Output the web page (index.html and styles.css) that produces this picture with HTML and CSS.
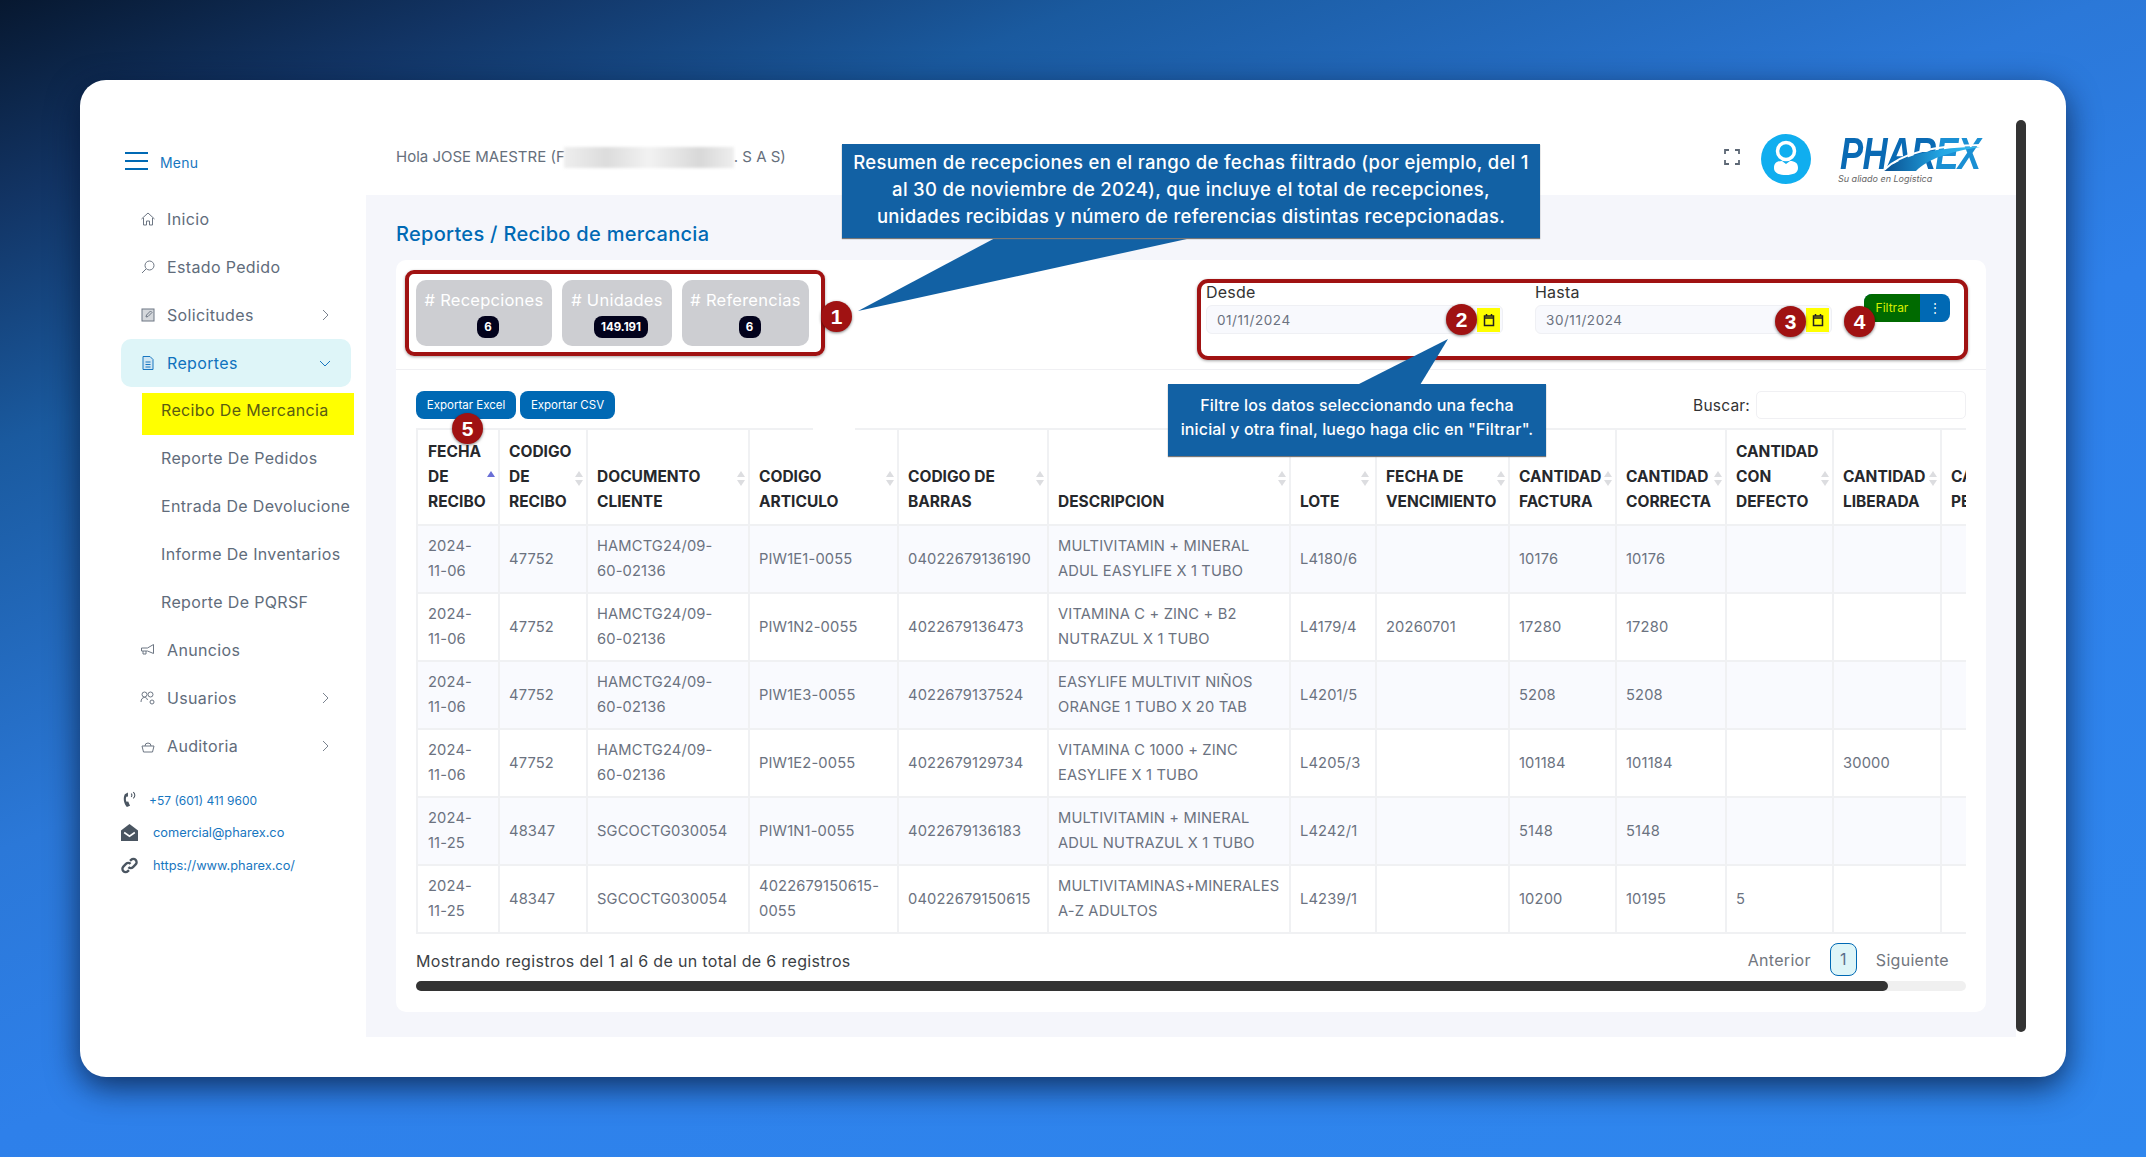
FILE: index.html
```html
<!DOCTYPE html>
<html lang="es">
<head>
    <meta charset="UTF-8">
    <title>Recibo de mercancia</title>
    <link rel="stylesheet" href="styles.css">
</head>
<body>
<div class="window">
    <aside class="sidebar">
        <div class="menu-toggle">
            <span class="burger"><i></i><i></i><i></i></span>
            <span class="menu-label">Menu</span>
        </div>
        <nav class="nav">
            <a class="nav-item">
                <svg class="nav-icon" viewBox="0 0 16 16"><path d="M1.500 8 8 2l6.500 6M3.500 7v7h3v-4h3v4h3V7"/></svg>
                <span>Inicio</span>
            </a>
            <a class="nav-item">
                <svg class="nav-icon" viewBox="0 0 16 16"><circle cx="9.500" cy="6.500" r="4.500"/><path d="M6 10 2 14"/></svg>
                <span>Estado Pedido</span>
            </a>
            <a class="nav-item">
                <svg class="nav-icon" viewBox="0 0 16 16"><rect x="2" y="2" width="12" height="12" fill="#d5d8dc"/><path d="m6 10 .5-2 4-4 1.500 1.500-4 4z"/></svg>
                <span>Solicitudes</span>
                <svg class="chev" viewBox="0 0 12 12"><path d="m4 1 5 5-5 5"/></svg>
            </a>
            <a class="nav-item active">
                <svg class="nav-icon" viewBox="0 0 16 16"><path d="M3 1.500h7l3 3v10H3z" fill="#cfe6f3"/><path d="M5.500 7h5M5.500 9.500h5M5.500 12h5"/></svg>
                <span>Reportes</span>
                <svg class="chev" viewBox="0 0 12 12"><path d="m1 4 5 5 5-5"/></svg>
            </a>
            <a class="sub-item current">Recibo De Mercancia</a>
            <a class="sub-item">Reporte De Pedidos</a>
            <a class="sub-item">Entrada De Devolucione</a>
            <a class="sub-item">Informe De Inventarios</a>
            <a class="sub-item">Reporte De PQRSF</a>
            <a class="nav-item">
                <svg class="nav-icon" viewBox="0 0 16 16"><path d="M1.500 6h6l6-3.500v9L7.500 9h-6zM3 9v3h3V9"/></svg>
                <span>Anuncios</span>
            </a>
            <a class="nav-item">
                <svg class="nav-icon" viewBox="0 0 16 16"><circle cx="4.500" cy="4.500" r="2.500"/><circle cx="10.500" cy="4.500" r="2.500"/><path d="M1 12c0-3 1.500-4.500 3.500-4.500S7 8.500 7.500 10"/><circle cx="12" cy="12" r="2"/></svg>
                <span>Usuarios</span>
                <svg class="chev" viewBox="0 0 12 12"><path d="m4 1 5 5-5 5"/></svg>
            </a>
            <a class="nav-item">
                <svg class="nav-icon" viewBox="0 0 16 16"><path d="M2 8h12l-1.500 6h-9zM5 8a3 3 0 1 1 6 0"/></svg>
                <span>Auditoria</span>
                <svg class="chev" viewBox="0 0 12 12"><path d="m4 1 5 5-5 5"/></svg>
            </a>
        </nav>
        <ul class="contact">
            <li>
                <svg class="contact-icon" viewBox="0 0 16 16"><path d="M6.500 1.500 3.600 3C1.800 6.500 2.500 11.500 5.500 15l3-1.200-1.700-4-1.600.3C4.400 8.500 4.400 6.800 5 5.300l1.600-.1z"/><path d="M9.500 2.500c1 .7 1 2.300 0 3M11.500 1c2 1.500 2 4.500 0 6" fill="none" stroke="#4a5561"/></svg>
                <a class="tel">+57 (601) 411 9600</a>
            </li>
            <li>
                <svg class="contact-icon" viewBox="0 0 16 16"><path d="M0 6 8 0l8 6v10H0z"/><path d="m3 8 5 3.500L13 8" fill="none" stroke="#fff" stroke-width="1.500"/></svg>
                <a>comercial@pharex.co</a>
            </li>
            <li>
                <svg class="contact-icon link-icon" viewBox="0 0 16 16"><path d="M7 9.500a3 3 0 0 0 4.300 0l2.500-2.500A3 3 0 0 0 9.500 2.700L8.500 3.700M9 6.500a3 3 0 0 0-4.300 0L2.200 9a3 3 0 0 0 4.300 4.300l1-1"/></svg>
                <a>https://www.pharex.co/</a>
            </li>
        </ul>
    </aside>

    <div class="main">
        <header class="topbar">
            <p class="greeting">Hola JOSE MAESTRE (F<span class="blurred"></span>. S A S)</p>
            <div class="topbar-right">
                <svg class="fullscreen" viewBox="0 0 16 16"><path d="M1 5V1h4M11 1h4v4M15 11v4h-4M5 15H1v-4"/></svg>
                <svg class="avatar" viewBox="0 0 50 50">
                    <circle cx="25" cy="25" r="25" fill="#10aeef"/>
                    <circle cx="25" cy="17" r="8.500" fill="none" stroke="#fff" stroke-width="3.500"/>
                    <path d="M13 34c0-5 3-7 8-7l4 3 4-3c5 0 8 2 8 7 0 5-5 7-12 7s-12-2-12-7z" fill="#fff"/>
                </svg>
                <div class="logo">
                    <span class="logo-name">PHAR<b>EX</b></span>
                    <svg class="logo-swoosh" viewBox="0 0 145 32">
                        <defs>
                            <linearGradient id="swoosh">
                                <stop offset="0" stop-color="#0a4f8f"/>
                                <stop offset=".6" stop-color="#22a6e4"/>
                                <stop offset="1" stop-color="#35bdf0"/>
                            </linearGradient>
                        </defs>
                        <path d="M44 32C62 15 100 8 140 8 108 13 88 20 76 32z" fill="url(#swoosh)"/>
                        <path d="M44 31C62 13 100 6 143 6" fill="none" stroke="#fff" stroke-width="2"/>
                    </svg>
                    <span class="logo-tag">Su aliado en Logística</span>
                </div>
            </div>
        </header>

        <section class="content">
            <h1 class="page-title">Reportes / Recibo de mercancia</h1>
            <div class="card">
                <div class="card-top">
                    <div class="stats">
                        <div class="stat stat-a"># Recepciones<span class="count">6</span></div>
                        <div class="stat stat-b"># Unidades<span class="count">149.191</span></div>
                        <div class="stat stat-c"># Referencias<span class="count">6</span></div>
                    </div>
                    <form class="filter">
                        <div class="field">
                            <label>Desde</label>
                            <div class="date-input">01/11/2024
                                <span class="cal"><svg viewBox="0 0 12 14"><path d="M1.500 3h9v9.500h-9zM1.500 5h9M3.500 1v2M8.500 1v2"/></svg></span>
                            </div>
                        </div>
                        <div class="field">
                            <label>Hasta</label>
                            <div class="date-input">30/11/2024
                                <span class="cal"><svg viewBox="0 0 12 14"><path d="M1.500 3h9v9.500h-9zM1.500 5h9M3.500 1v2M8.500 1v2"/></svg></span>
                            </div>
                        </div>
                        <div class="filter-btn">
                            <span class="filter-label">Filtrar</span>
                            <span class="filter-more">&#8942;</span>
                        </div>
                    </form>
                </div>

                <div class="card-body">
                    <div class="toolbar">
                        <div class="exports">
                            <button class="btn btn-excel">Exportar Excel</button>
                            <button class="btn btn-csv">Exportar CSV</button>
                        </div>
                        <div class="search">
                            <label>Buscar:</label>
                            <div class="search-input"></div>
                        </div>
                    </div>

                    <div class="table-wrap">
                        <table class="report">
                            <colgroup>
                                <col class="c1"><col class="c2"><col class="c3"><col class="c4"><col class="c5"><col class="c6"><col class="c7">
                                <col class="c8"><col class="c9"><col class="c10"><col class="c11"><col class="c12"><col class="c13">
                            </colgroup>
                            <thead>
                                <tr>
                                    <th class="sorted">FECHA<br>DE<br>RECIBO</th>
                                    <th>CODIGO<br>DE<br>RECIBO</th>
                                    <th>DOCUMENTO<br>CLIENTE</th>
                                    <th>CODIGO<br>ARTICULO</th>
                                    <th>CODIGO DE<br>BARRAS</th>
                                    <th>DESCRIPCION</th>
                                    <th>LOTE</th>
                                    <th>FECHA DE<br>VENCIMIENTO</th>
                                    <th>CANTIDAD<br>FACTURA</th>
                                    <th>CANTIDAD<br>CORRECTA</th>
                                    <th>CANTIDAD<br>CON<br>DEFECTO</th>
                                    <th>CANTIDAD<br>LIBERADA</th>
                                    <th>CANTIDAD<br>PENDIENTE</th>
                                </tr>
                            </thead>
                            <tbody>
                                <tr>
                                    <td>2024-<br>11-06</td><td>47752</td><td>HAMCTG24/09-<br>60-02136</td><td>PIW1E1-0055</td><td>04022679136190</td>
                                    <td>MULTIVITAMIN + MINERAL<br>ADUL EASYLIFE X 1 TUBO</td><td>L4180/6</td><td></td><td>10176</td><td>10176</td><td></td><td></td><td></td>
                                </tr>
                                <tr>
                                    <td>2024-<br>11-06</td><td>47752</td><td>HAMCTG24/09-<br>60-02136</td><td>PIW1N2-0055</td><td>4022679136473</td>
                                    <td>VITAMINA C + ZINC + B2<br>NUTRAZUL X 1 TUBO</td><td>L4179/4</td><td>20260701</td><td>17280</td><td>17280</td><td></td><td></td><td></td>
                                </tr>
                                <tr>
                                    <td>2024-<br>11-06</td><td>47752</td><td>HAMCTG24/09-<br>60-02136</td><td>PIW1E3-0055</td><td>4022679137524</td>
                                    <td>EASYLIFE MULTIVIT NIÑOS<br>ORANGE 1 TUBO X 20 TAB</td><td>L4201/5</td><td></td><td>5208</td><td>5208</td><td></td><td></td><td></td>
                                </tr>
                                <tr>
                                    <td>2024-<br>11-06</td><td>47752</td><td>HAMCTG24/09-<br>60-02136</td><td>PIW1E2-0055</td><td>4022679129734</td>
                                    <td>VITAMINA C 1000 + ZINC<br>EASYLIFE X 1 TUBO</td><td>L4205/3</td><td></td><td>101184</td><td>101184</td><td></td><td>30000</td><td></td>
                                </tr>
                                <tr>
                                    <td>2024-<br>11-25</td><td>48347</td><td>SGCOCTG030054</td><td>PIW1N1-0055</td><td>4022679136183</td>
                                    <td>MULTIVITAMIN + MINERAL<br>ADUL NUTRAZUL X 1 TUBO</td><td>L4242/1</td><td></td><td>5148</td><td>5148</td><td></td><td></td><td></td>
                                </tr>
                                <tr>
                                    <td>2024-<br>11-25</td><td>48347</td><td>SGCOCTG030054</td><td>4022679150615-<br>0055</td><td>04022679150615</td>
                                    <td>MULTIVITAMINAS+MINERALES<br>A-Z ADULTOS</td><td>L4239/1</td><td></td><td>10200</td><td>10195</td><td>5</td><td></td><td></td>
                                </tr>
                            </tbody>
                        </table>
                    </div>

                    <div class="table-foot">
                        <span class="info">Mostrando registros del 1 al 6 de un total de 6 registros</span>
                        <div class="pager">
                            <a>Anterior</a>
                            <a class="page-on">1</a>
                            <a>Siguiente</a>
                        </div>
                    </div>
                    <div class="h-scroll"><div class="h-thumb"></div></div>
                </div>
            </div>
        </section>
    </div>
    <div class="v-scroll"></div>
</div>

<!-- annotations drawn on top of the screenshot -->
<svg class="tails" viewBox="0 0 2146 1157">
    <polygon points="997,237 1196,237 858,311"/>
    <polygon points="1357,385 1420,385 1448,339"/>
</svg>
<div class="callout callout-top">Resumen de recepciones en el rango de fechas filtrado (por ejemplo, del 1<br>al 30 de noviembre de 2024), que incluye el total de recepciones,<br>unidades recibidas y número de referencias distintas recepcionadas.</div>
<div class="callout callout-filter">Filtre los datos seleccionando una fecha<br>inicial y otra final, luego haga clic en "Filtrar".</div>
<span class="table-gap"></span>
<span class="pin pin-1">1</span>
<span class="pin pin-2">2</span>
<span class="pin pin-3">3</span>
<span class="pin pin-4">4</span>
<span class="pin pin-5">5</span>
</body>
</html>
```

FILE: styles.css
```css
* {
    box-sizing: border-box;
}

html, body {
    margin: 0;
    height: 100%;
}

body {
    position: relative;
    height: 1157px;
    padding: 80px 80px 0;
    overflow: hidden;
    font-family: "Inter", "Open Sans", sans-serif;
    background: linear-gradient(158deg, #071830 0%, #123464 10%, #1a5a9f 22%, #2b78d8 42%, #2e80ea 56%, #2f87ee 100%);
}

a {
    display: block;
}

.window {
    display: flex;
    width: 1986px;
    height: 997px;
    padding-bottom: 40px;
    background: #fff;
    border-radius: 26px;
    box-shadow: 0 10px 32px rgba(5, 20, 50, .75);
}

/* sidebar */
.sidebar {
    width: 286px;
    flex: none;
    padding: 68px 15px 0 41px;
}

.menu-toggle {
    display: flex;
    align-items: flex-end;
    gap: 12px;
    margin-left: 4px;
    height: 22px;
}

.burger {
    display: flex;
    flex-direction: column;
    justify-content: space-between;
    width: 23px;
    height: 18px;
}

.burger i {
    display: block;
    height: 2px;
    background: #0069b4;
}

.menu-label {
    font-size: 14px;
    line-height: 14px;
    letter-spacing: .2px;
    color: #1776c0;
}

.nav {
    margin-top: 25px;
}

.nav-item {
    display: flex;
    align-items: center;
    width: 230px;
    height: 48px;
    padding: 0 20px 0 19px;
    border-radius: 10px;
    font-size: 16px;
    letter-spacing: .35px;
    color: #616c7b;
}

.nav-item span {
    margin-left: 11px;
    flex: 1;
}

.nav-icon {
    width: 16px;
    height: 16px;
    fill: none;
    stroke: #6d7683;
    stroke-width: 1;
}

.chev {
    width: 12px;
    height: 12px;
    fill: none;
    stroke: #7a838f;
    stroke-width: 1;
}

.nav-item.active {
    background: #def5f8;
    color: #0f72bd;
}

.nav-item.active .nav-icon,
.nav-item.active .chev {
    stroke: #1776c0;
}

.sub-item {
    width: 212px;
    height: 48px;
    padding: 15px 0 0 19px;
    margin-left: 21px;
    font-size: 16px;
    line-height: 19px;
    letter-spacing: .35px;
    white-space: nowrap;
    overflow: hidden;
    color: #616c7b;
}

.sub-item.current {
    height: 42px;
    margin-top: 6px;
    padding-top: 8px;
    background: #ff0;
    color: #5a5c12;
    margin-bottom: 0;
}

.sub-item.current + .sub-item {
    margin-top: -1px;
}

.contact {
    list-style: none;
    margin: 13px 0 0;
    padding: 0;
}

.contact li {
    display: flex;
    align-items: center;
    height: 33px;
    gap: 15px;
    font-size: 12.800px;
    color: #1776c0;
}

.contact-icon {
    width: 17px;
    height: 17px;
    flex: none;
    fill: #4a5561;
}

.link-icon {
    fill: none;
    stroke: #4a5561;
    stroke-width: 2.200;
}

.tel {
    margin-left: -4px;
    margin-top: 1px;
    font-size: 12px;
}

/* main column */
.main {
    width: 1650px;
    flex: none;
    display: flex;
    flex-direction: column;
    background: #f5f6fb;
}

.topbar {
    height: 115px;
    flex: none;
    display: flex;
    justify-content: space-between;
    padding: 0 30px;
    background: #fff;
}

.greeting {
    margin: 66px 0 0;
    font-size: 15px;
    line-height: 22px;
    color: #666f7c;
}

.blurred {
    display: inline-block;
    vertical-align: middle;
    width: 170px;
    height: 21px;
    margin-left: -1px;
    background: linear-gradient(90deg, #eeeeee, #dcdcdc 25%, #f2f2f2 50%, #d8d8d8 80%, #eeeeee);
    filter: blur(1.500px);
}

.topbar-right {
    display: flex;
    align-items: flex-start;
}

.fullscreen {
    width: 16px;
    height: 16px;
    margin-top: 69px;
    fill: none;
    stroke: #5d6875;
    stroke-width: 1.800;
}

.avatar {
    width: 50px;
    height: 50px;
    margin: 54px 0 0 21px;
}

.logo {
    position: relative;
    width: 145px;
    height: 60px;
    margin: 56px 1px 0 29px;
}

.logo-name {
    display: block;
    font-family: "Liberation Sans", sans-serif;
    font-size: 44px;
    font-weight: 700;
    font-style: italic;
    line-height: 36px;
    letter-spacing: -1px;
    white-space: nowrap;
    color: #0a6ab4;
    transform: scaleX(.79);
    transform-origin: left top;
}

.logo-name b {
    color: #1a8fd3;
}

.logo-swoosh {
    position: absolute;
    top: 3px;
    left: 0;
    width: 145px;
    height: 32px;
}

.logo-tag {
    display: block;
    margin-top: 1px;
    margin-left: -2px;
    font-size: 9px;
    font-style: italic;
    color: #666;
}

.content {
    flex: 1;
    padding: 27px 30px 25px;
}

.page-title {
    margin: 0;
    height: 38px;
    font-size: 20px;
    line-height: 24px;
    font-weight: 500;
    letter-spacing: .3px;
    color: #0069b4;
}

/* card */
.card {
    height: 752px;
    background: #fff;
    border-radius: 10px;
}

.card-top {
    display: flex;
    justify-content: space-between;
    align-items: flex-start;
    height: 110px;
    padding: 10px 18px 0 9px;
    border-bottom: 1px solid #f0f0f3;
}

.stats {
    display: flex;
    gap: 10px;
    height: 86px;
    width: 420px;
    padding: 6px 7px;
    border: 4px solid #a01212;
    border-radius: 9px;
    box-shadow: 0 1px 3px rgba(0, 0, 0, .35);
}

.stat {
    display: flex;
    flex-direction: column;
    align-items: center;
    height: 66px;
    padding-top: 10px;
    background: #cdced2;
    border-radius: 10px;
    font-size: 16.500px;
    line-height: 20px;
    letter-spacing: .25px;
    color: #fff;
}

.stat-a {
    width: 136px;
}

.stat-b {
    width: 110px;
}

.stat-c {
    width: 127px;
}

.count {
    min-width: 22px;
    height: 22px;
    margin-top: 6px;
    margin-left: 8px;
    padding: 0 7px;
    background: #02021c;
    border-radius: 8px;
    font-size: 11.500px;
    font-weight: 700;
    line-height: 22px;
    letter-spacing: 0;
    text-align: center;
}

.filter {
    display: flex;
    width: 771px;
    height: 81px;
    margin-top: 9px;
    margin-bottom: 0;
    padding: 0 5px;
    border: 4px solid #a01212;
    border-radius: 11px;
    box-shadow: 0 1px 3px rgba(0, 0, 0, .35);
}

.field {
    width: 297px;
    margin-right: 32px;
}

.field label {
    display: block;
    height: 22px;
    font-size: 16px;
    line-height: 18px;
    letter-spacing: .2px;
    color: #333;
}

.date-input {
    display: flex;
    justify-content: space-between;
    align-items: center;
    height: 29px;
    padding: 0 2px 0 10px;
    background: #f8f9fd;
    border: 1px solid #eff0f4;
    border-radius: 6px;
    font-size: 13.500px;
    letter-spacing: .55px;
    color: #6b7280;
}

.cal {
    display: flex;
    align-items: center;
    justify-content: center;
    width: 23px;
    height: 24px;
    background: #ff0;
}

.cal svg {
    width: 12px;
    height: 14px;
    fill: none;
    stroke: #222;
    stroke-width: 1.500;
}

.filter-btn {
    display: flex;
    width: 86px;
    height: 28px;
    margin-top: 11px;
    border-radius: 8px;
    overflow: hidden;
    font-size: 12px;
    line-height: 28px;
    color: #fff;
    background: #0069b4;
}

.filter-label {
    width: 56px;
    background: #006a00;
    color: #d8f000;
    text-align: center;
}

.filter-more {
    flex: 1;
    text-align: center;
}

/* table area */
.card-body {
    padding: 21px 20px 0;
}

.toolbar {
    display: flex;
    justify-content: space-between;
    height: 28px;
}

.exports {
    display: flex;
    gap: 4px;
}

.btn {
    height: 28px;
    padding: 0;
    border: 0;
    border-radius: 8px;
    background: #0069b4;
    color: #fff;
    font: 11.500px "Inter", sans-serif;
}

.btn-excel {
    width: 100px;
}

.btn-csv {
    width: 95px;
}

.search {
    display: flex;
    align-items: center;
    gap: 6px;
    font-size: 15.500px;
    letter-spacing: .2px;
    color: #333;
}

.search-input {
    width: 210px;
    height: 28px;
    border: 1px solid #f0f0f3;
    border-radius: 5px;
}

.table-wrap {
    width: 1550px;
    margin-top: 9px;
    overflow: hidden;
}

.report {
    width: 1650px;
    table-layout: fixed;
    border-collapse: collapse;
}

.c1 { width: 82px; }
.c2 { width: 88px; }
.c3 { width: 162px; }
.c4 { width: 149px; }
.c5 { width: 150px; }
.c6 { width: 242px; }
.c7 { width: 86px; }
.c8 { width: 133px; }
.c9 { width: 107px; }
.c10 { width: 110px; }
.c11 { width: 107px; }
.c12 { width: 108px; }
.c13 { width: 126px; }

.report th,
.report td {
    border: 2px solid #f0f1f3;
    padding: 0 0 0 9px;
    text-align: left;
    white-space: nowrap;
    overflow: hidden;
    line-height: 25px;
}

.report th:first-child,
.report td:first-child {
    padding-left: 10px;
}

.report th {
    position: relative;
    height: 96px;
    padding-bottom: 10px;
    vertical-align: bottom;
    font-size: 15.500px;
    font-weight: 700;
    color: #26282c;
}

/* sort arrows */
.report th::before,
.report th::after {
    content: "";
    position: absolute;
    right: 3px;
    border-left: 4px solid transparent;
    border-right: 4px solid transparent;
}

.report th::before {
    top: 41px;
    border-bottom: 6px solid #dcdde0;
}

.report th::after {
    top: 50px;
    border-top: 6px solid #dcdde0;
}

.report th.sorted::before {
    border-bottom-color: #6a6fd6;
}

.report th.sorted::after {
    border-top-color: transparent;
}

.report th:nth-child(7)::before,
.report th:nth-child(7)::after {
    right: 6px;
}

.report td {
    height: 68px;
    font-size: 14.700px;
    letter-spacing: .15px;
    color: #6b7280;
}

.report tbody tr:nth-child(odd) td {
    background: #f9fafe;
}

.table-foot {
    display: flex;
    justify-content: space-between;
    height: 47px;
    padding-top: 9px;
}

.info {
    margin-top: 7px;
    font-size: 16px;
    line-height: 22px;
    letter-spacing: .33px;
    color: #3c3f45;
}

.pager {
    display: flex;
    align-items: center;
    height: 33px;
    margin-right: 17px;
    font-size: 16px;
    letter-spacing: .3px;
    color: #72767e;
}

.page-on {
    width: 27px;
    height: 33px;
    margin: 0 19px;
    border: 1px solid #0069b4;
    border-radius: 8px;
    background: #def5f8;
    line-height: 31px;
    text-align: center;
    color: #5b6f8c;
}

.h-scroll {
    height: 10px;
    background: #f0f0f0;
    border-radius: 5px;
}

.h-thumb {
    width: 1472px;
    height: 10px;
    background: #333;
    border-radius: 5px;
}

.v-scroll {
    width: 10px;
    height: 912px;
    margin-top: 40px;
    background: #333;
    border-radius: 5px;
}

/* annotations */
.tails {
    position: absolute;
    top: 0;
    left: 0;
    width: 2146px;
    height: 1157px;
    pointer-events: none;
}

.tails polygon {
    fill: #1261a4;
}

.callout {
    position: absolute;
    background: #1261a4;
    color: #fff;
    text-align: center;
    white-space: nowrap;
    font-weight: 500;
}

.callout-top {
    top: 144px;
    left: 842px;
    width: 698px;
    height: 94px;
    padding-top: 5px;
    font-size: 18.500px;
    line-height: 27px;
    letter-spacing: .3px;
    box-shadow: 0 1px 1px #777;
}

.callout-filter {
    top: 384px;
    left: 1168px;
    width: 378px;
    height: 72px;
    padding-top: 9px;
    font-size: 16px;
    line-height: 24px;
    letter-spacing: .15px;
    box-shadow: 0 1px 1px #777;
}

/* bit of the table top rule wiped out in the reference */
.table-gap {
    position: absolute;
    top: 426px;
    left: 813px;
    width: 42px;
    height: 5px;
    background: #fff;
}

.pin {
    position: absolute;
    width: 31px;
    height: 31px;
    background: #a01212;
    border-radius: 50%;
    box-shadow: 0 1px 3px rgba(0, 0, 0, .5);
    font-family: "Liberation Sans", sans-serif;
    font-size: 21px;
    font-weight: 700;
    line-height: 31px;
    text-align: center;
    color: #fff;
}

.pin-1 { top: 301px; left: 821px; }
.pin-2 { top: 304px; left: 1446px; }
.pin-3 { top: 306px; left: 1775px; }
.pin-4 { top: 306px; left: 1844px; }
.pin-5 { top: 413px; left: 452px; }
```
